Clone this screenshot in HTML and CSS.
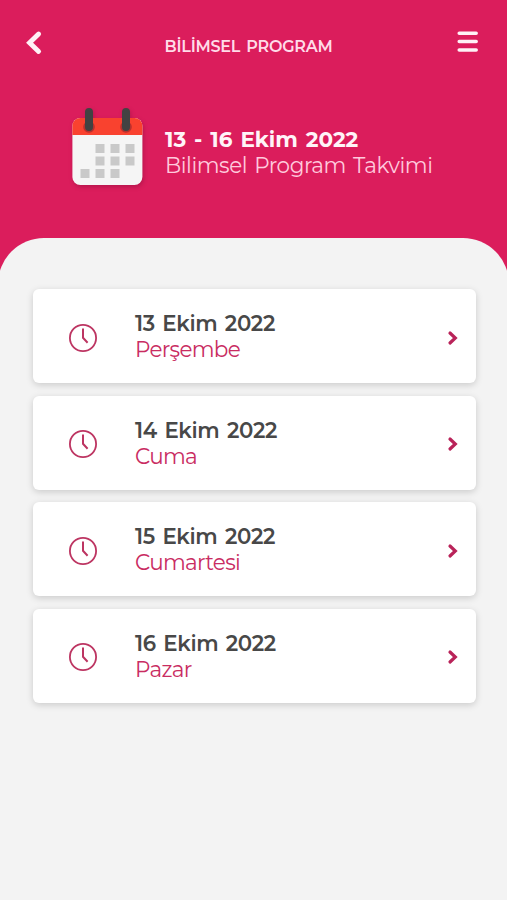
FILE: index.html
```html
<!DOCTYPE html>
<html lang="tr">
<head>
<meta charset="utf-8">
<title>Bilimsel Program</title>
<link rel="stylesheet" href="styles.css">
</head>
<body>
<svg class="defs" aria-hidden="true">
  <symbol id="clock" viewBox="0 0 30 30">
    <circle cx="15" cy="15" r="13.1" fill="none" stroke="currentColor" stroke-width="1.8"/>
    <path d="M15 5.4V14.8L19.6 19.7" fill="none" stroke="currentColor" stroke-width="2"/>
  </symbol>
  <symbol id="chevron" viewBox="0 0 12 16">
    <path d="M3 3L8.3 8L3 13" fill="none" stroke="currentColor" stroke-width="3.2" stroke-linecap="round" stroke-linejoin="miter"/>
  </symbol>
</svg>
<header class="header">
  <nav class="bar">
    <svg class="back" viewBox="0 0 18 26"><path d="M13.6 4L4.6 12.7L13.6 21.4" fill="none" stroke="#fff1f6" stroke-width="4.9" stroke-linecap="round"/></svg>
    <h1 class="title">BİLİMSEL PROGRAM</h1>
    <svg class="menu" viewBox="0 0 24 24"><path d="M3.2 3.3H20.2M3.2 11.6H20.2M3.2 19.9H20.2" stroke="#fff1f6" stroke-width="3.5" stroke-linecap="round"/></svg>
  </nav>
  <div class="hero">
    <svg class="calendar" viewBox="0 0 76 84">
      <rect x="3.4" y="13" width="70" height="67" rx="8" fill="#f5f5f5"/>
      <path d="M3.4 30V21a8 8 0 0 1 8-8h54a8 8 0 0 1 8 8v9z" fill="#f9422f"/>
      <g fill="#ba302d"><circle cx="20" cy="22" r="5.8"/><circle cx="57" cy="22" r="5.8"/></g>
      <g fill="none" stroke="#424242" stroke-width="8" stroke-linecap="round"><path d="M20 7V22M57 7V22"/></g>
      <g fill="#c9c9c9">
        <rect x="26.5" y="39" width="9" height="9"/><rect x="41.5" y="39" width="9" height="9"/><rect x="56.5" y="39" width="9" height="9"/>
        <rect x="26.5" y="51.5" width="9" height="9"/><rect x="41.5" y="51.5" width="9" height="9"/><rect x="56.5" y="51.5" width="9" height="9"/>
        <rect x="11.5" y="64" width="9" height="9"/><rect x="26.5" y="64" width="9" height="9"/><rect x="41.5" y="64" width="9" height="9"/>
      </g>
    </svg>
    <div class="summary">
      <div class="range">13 - 16 Ekim 2022</div>
      <div class="subtitle">Bilimsel Program Takvimi</div>
    </div>
  </div>
</header>
<main class="sheet">
  <a class="card"><svg class="clock"><use href="#clock"/></svg><div class="text"><div class="date">13 Ekim 2022</div><div class="day">Perşembe</div></div><svg class="chevron"><use href="#chevron"/></svg></a>
  <a class="card"><svg class="clock"><use href="#clock"/></svg><div class="text"><div class="date">14 Ekim 2022</div><div class="day">Cuma</div></div><svg class="chevron"><use href="#chevron"/></svg></a>
  <a class="card"><svg class="clock"><use href="#clock"/></svg><div class="text"><div class="date">15 Ekim 2022</div><div class="day">Cumartesi</div></div><svg class="chevron"><use href="#chevron"/></svg></a>
  <a class="card"><svg class="clock"><use href="#clock"/></svg><div class="text"><div class="date">16 Ekim 2022</div><div class="day">Pazar</div></div><svg class="chevron"><use href="#chevron"/></svg></a>
</main>
</body>
</html>
```
FILE: styles.css
```css
* { box-sizing: border-box; }
body {
  margin: 0;
  height: 900px;
  display: flex;
  flex-direction: column;
  overflow: hidden;
  background: #db1d5c;
  font-family: Montserrat, Inter, sans-serif;
}
.defs { display: none; }
svg { display: block; flex: none; }
.header { height: 238px; flex: none; color: #ffedf4; }
.bar {
  height: 92px;
  padding: 0 27px 0 25px;
  display: grid;
  grid-template-columns: 24px 1fr 24px;
  align-items: center;
}
.back { width: 18px; height: 26px; margin-top: -7px; }
.menu { width: 24px; height: 24px; margin-top: -8px; }
.title {
  margin: 1px 0 0 -8px;
  text-align: center;
  font-size: 16px;
  line-height: 20px;
  font-weight: 600;
  letter-spacing: -.25px;
  word-spacing: 2px;
  color: #ffdbe8;
}
.hero { display: flex; padding: 13px 0 0 69px; }
.calendar { width: 76px; height: 84px; filter: drop-shadow(1px 2px 2px rgba(70, 0, 30, .25)); }
.summary { margin: 21px 0 0 20px; white-space: nowrap; line-height: 26px; }
.range { font-size: 21.5px; font-weight: 700; letter-spacing: -.05px; word-spacing: 2px; color: #fff4f8; }
.subtitle { font-size: 21.5px; font-weight: 400; letter-spacing: -.45px; word-spacing: 2px; color: #ffcadd; }
.sheet {
  flex: 1;
  margin: 0 -2px;
  padding: 51px 33px 0 35px;
  display: flex;
  flex-direction: column;
  gap: 12.6px;
  background: #f3f3f3;
  border-radius: 46px 46px 0 0;
}
.card {
  height: 94px;
  flex: none;
  display: flex;
  align-items: center;
  padding: 0 17px 0 35px;
  background: #fff;
  border-radius: 6px;
  box-shadow: 0 2px 7px rgba(0, 0, 0, .17);
}
.clock { width: 30px; height: 30px; margin-top: 3px; color: #bd3562; }
.text { flex: 1; margin: 0 0 0 37px; line-height: 26px; white-space: nowrap; }
.date { font-size: 21.3px; font-weight: 600; color: #484848; letter-spacing: -.35px; word-spacing: 2px; }
.day { font-size: 21.5px; font-weight: 400; color: #c92c62; letter-spacing: -.7px; }
.chevron { width: 12px; height: 16px; margin-top: 3px; color: #b92359; }
```
